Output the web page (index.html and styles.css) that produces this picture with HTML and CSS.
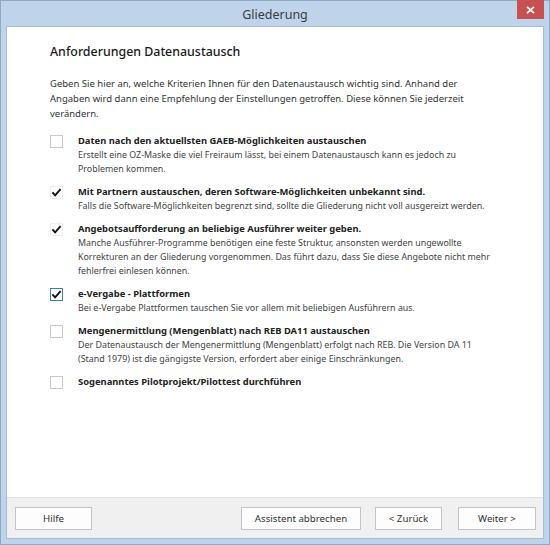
FILE: index.html
```html
<!DOCTYPE html>
<html lang="de">
<head>
<meta charset="utf-8">
<title>Gliederung</title>
<link rel="stylesheet" href="styles.css">
</head>
<body>
<div class="window">
  <div class="titlebar">
    <span class="title">Gliederung</span>
    <div class="close">
      <svg width="9" height="8" viewBox="0 0 9 8"><path d="M1 0.8 L8 7.2 M8 0.8 L1 7.2" stroke="#fff" stroke-width="1.8"/></svg>
    </div>
  </div>
  <div class="client">
    <div class="content">
      <h1 class="heading">Anforderungen Datenaustausch</h1>
      <p class="intro">Geben Sie hier an, welche Kriterien Ihnen für den Datenaustausch wichtig sind. Anhand der<br>Angaben wird dann eine Empfehlung der Einstellungen getroffen. Diese können Sie jederzeit<br>verändern.</p>
      <div class="options">
        <div class="option">
          <span class="box"></span>
          <div class="text">
            <div class="otitle">Daten nach den aktuellsten GAEB-Möglichkeiten austauschen</div>
            <div class="desc">Erstellt eine OZ-Maske die viel Freiraum lässt, bei einem Datenaustausch kann es jedoch zu<br>Problemen kommen.</div>
          </div>
        </div>
        <div class="option">
          <span class="box checked"><svg width="13" height="13" viewBox="0 0 13 13"><path d="M2.4 6.4 L5.1 9.3 L10.6 3.2" fill="none" stroke="#111" stroke-width="1.9"/></svg></span>
          <div class="text">
            <div class="otitle">Mit Partnern austauschen, deren Software-Möglichkeiten unbekannt sind.</div>
            <div class="desc">Falls die Software-Möglichkeiten begrenzt sind, sollte die Gliederung nicht voll ausgereizt werden.</div>
          </div>
        </div>
        <div class="option">
          <span class="box checked"><svg width="13" height="13" viewBox="0 0 13 13"><path d="M2.4 6.4 L5.1 9.3 L10.6 3.2" fill="none" stroke="#111" stroke-width="1.9"/></svg></span>
          <div class="text">
            <div class="otitle">Angebotsaufforderung an beliebige Ausführer weiter geben.</div>
            <div class="desc">Manche Ausführer-Programme benötigen eine feste Struktur, ansonsten werden ungewollte<br>Korrekturen an der Gliederung vorgenommen. Das führt dazu, dass Sie diese Angebote nicht mehr<br>fehlerfrei einlesen können.</div>
          </div>
        </div>
        <div class="option">
          <span class="box checked focus"><svg width="13" height="13" viewBox="0 0 13 13"><path d="M2.4 6.4 L5.1 9.3 L10.6 3.2" fill="none" stroke="#111" stroke-width="1.9"/></svg></span>
          <div class="text">
            <div class="otitle">e-Vergabe - Plattformen</div>
            <div class="desc">Bei e-Vergabe Plattformen tauschen Sie vor allem mit beliebigen Ausführern aus.</div>
          </div>
        </div>
        <div class="option">
          <span class="box"></span>
          <div class="text">
            <div class="otitle">Mengenermittlung (Mengenblatt) nach REB DA11 austauschen</div>
            <div class="desc">Der Datenaustausch der Mengenermittlung (Mengenblatt) erfolgt nach REB. Die Version DA 11<br>(Stand 1979) ist die gängigste Version, erfordert aber einige Einschränkungen.</div>
          </div>
        </div>
        <div class="option">
          <span class="box"></span>
          <div class="text">
            <div class="otitle">Sogenanntes Pilotprojekt/Pilottest durchführen</div>
          </div>
        </div>
      </div>
    </div>
    <div class="footer">
      <button class="btn btn-help">Hilfe</button>
      <div class="spacer"></div>
      <button class="btn btn-cancel">Assistent abbrechen</button>
      <button class="btn btn-back">&lt; Zurück</button>
      <button class="btn btn-next">Weiter &gt;</button>
    </div>
  </div>
</div>
</body>
</html>
```
FILE: styles.css
```css
* { box-sizing: border-box; }
html, body { margin: 0; padding: 0; }
body {
  font-family: "Noto Sans", "Open Sans", sans-serif;
  background: #bfd4ea;
}
.window {
  width: 550px;
  height: 545px;
  background: #bfd4ea;
  border: 1px solid #8fa9c5;
  display: flex;
  flex-direction: column;
}
.titlebar {
  position: relative;
  height: 25px;
  flex: none;
  display: flex;
  align-items: center;
  justify-content: center;
}
.title {
  font-size: 12.5px;
  color: #3b3b3b;
  margin-top: 2px;
}
.close {
  position: absolute;
  right: 5px;
  top: -1px;
  width: 27px;
  height: 19px;
  background: #c75050;
  display: flex;
  align-items: center;
  justify-content: center;
}
.client {
  flex: 1;
  margin: 0 5px 5px 5px;
  border: 1px solid #a7bdd5;
  background: #fff;
  display: flex;
  flex-direction: column;
}
.content {
  flex: 1;
  padding: 15px 20px 0 43px;
}
.heading {
  margin: 0 0 14px 0;
  font-size: 12.4px;
  line-height: 20px;
  font-weight: 500;
  color: #1a1a1a;
}
.intro {
  margin: 0 0 13px 0;
  font-size: 9.5px;
  line-height: 15px;
  color: #333;
}
.options {
  display: flex;
  flex-direction: column;
  gap: 9px;
}
.option {
  display: flex;
  align-items: flex-start;
  gap: 15px;
}
.box {
  flex: none;
  width: 13px;
  height: 13px;
  margin-top: 1px;
  border: 1px solid #c9c9c9;
  background: #fff;
  position: relative;
}
.box.checked { border-color: #ececec; }
.box.focus { border-color: #3c7fb1; }
.box svg { position: absolute; left: -1px; top: -1px; }
.otitle {
  font-size: 9.4px;
  line-height: 14px;
  font-weight: 700;
  color: #222;
}
.desc {
  font-size: 8.9px;
  line-height: 14px;
  color: #444;
}
.footer {
  flex: none;
  height: 41px;
  background: #f0f0f0;
  border-top: 1px solid #dedede;
  display: flex;
  align-items: flex-start;
  padding: 9px 7px 0 8px;
}
.spacer { flex: 1; }
.btn {
  height: 23px;
  background: #fdfdfd;
  border: 1px solid #c4c4c4;
  font-family: inherit;
  font-size: 9.7px;
  color: #333;
  padding: 0;
}
.btn-help { width: 77px; }
.btn-cancel { width: 120px; margin-right: 14px; }
.btn-back { width: 67px; margin-right: 16px; }
.btn-next { width: 78px; }
```
